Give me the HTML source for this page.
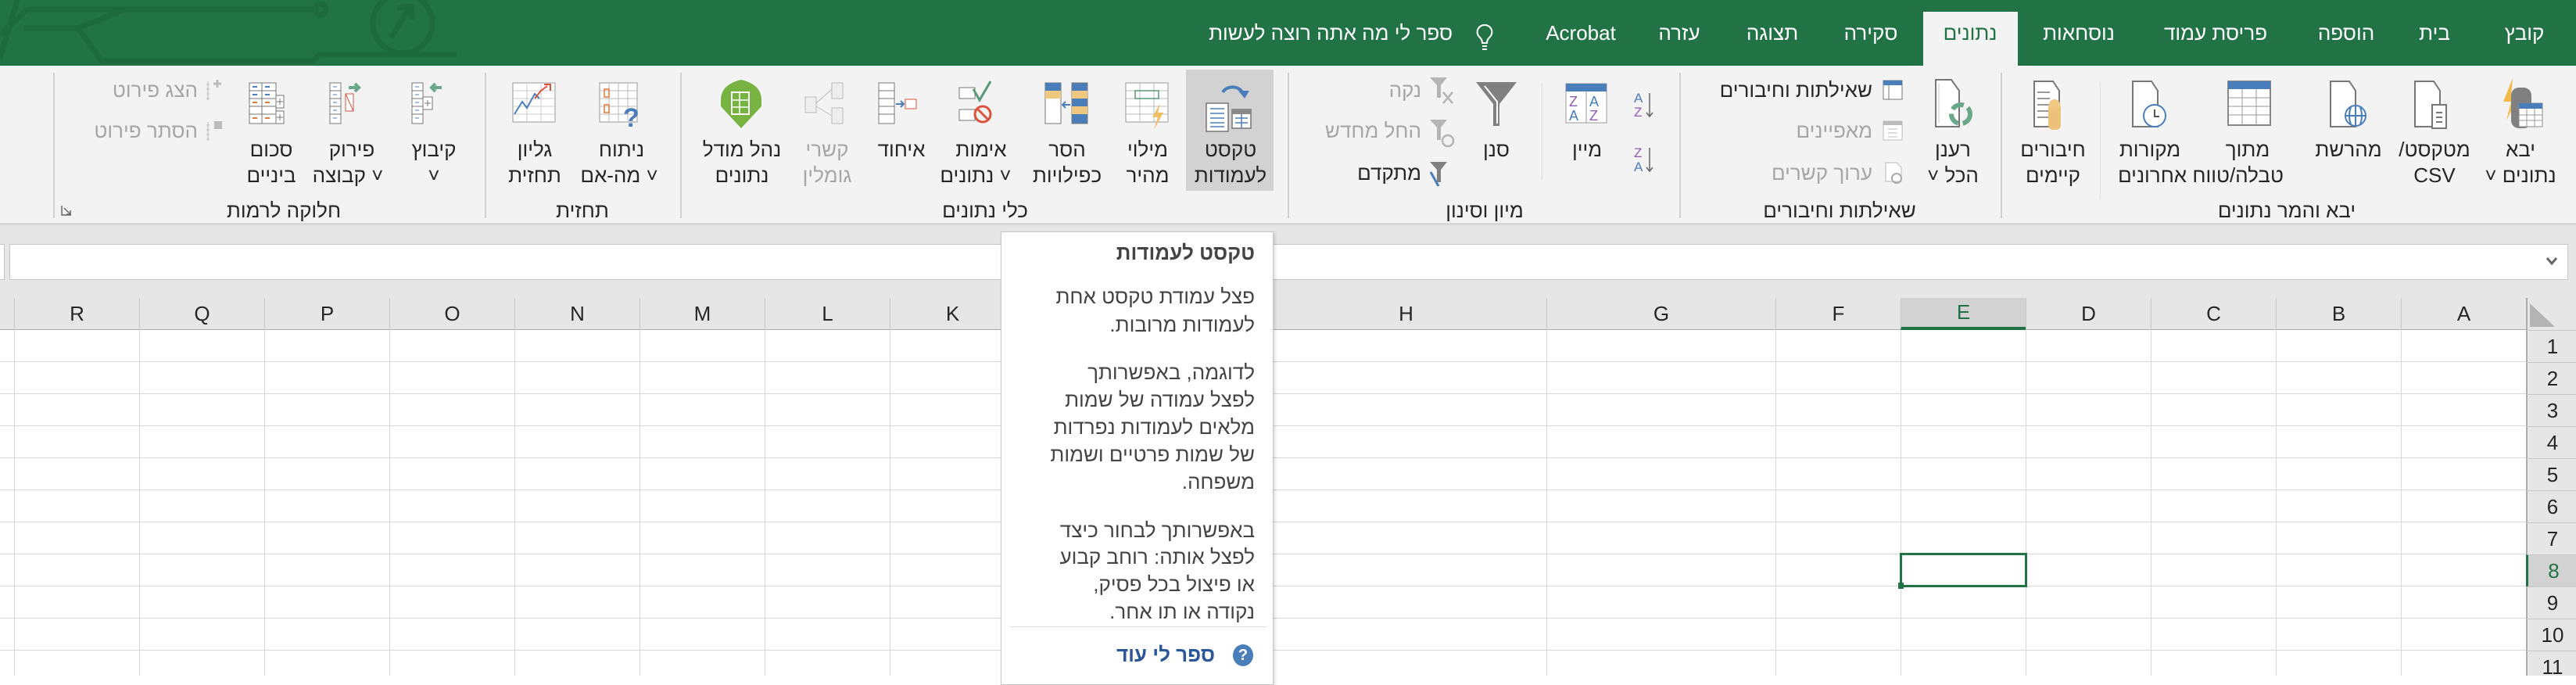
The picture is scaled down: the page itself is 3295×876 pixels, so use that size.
<!DOCTYPE html>
<html><head><meta charset="utf-8"><style>
*{margin:0;padding:0;box-sizing:border-box}
body{width:3295px;height:864px;overflow:hidden;background:#fff;font-family:"Liberation Sans","DejaVu Sans",sans-serif;position:relative}
.a{position:absolute}
.t{position:absolute;white-space:nowrap;font-size:26px;line-height:30px;color:#262626;direction:rtl}
.c{transform:translateX(-50%)}
.g{color:#a6a6a6}
.tab{position:absolute;top:27px;font-size:26px;line-height:30px;color:#fff;white-space:nowrap;transform:translateX(-50%);direction:rtl}
.sep{position:absolute;top:93px;width:2px;height:186px;background:#d2d2d2}
.vl{position:absolute;top:422px;width:1px;height:442px;background:#dadada}
.hl{position:absolute;left:0;width:3231px;height:1px;background:#d8d8d8}
.ch{position:absolute;top:381px;height:41px;font-size:26px;line-height:41px;color:#262626;text-align:center;border-left:1px solid #c8c8c8}
.rh{position:absolute;left:3231px;width:64px;height:41px;font-size:26px;line-height:41px;text-align:center;color:#262626;border-top:1px solid #c8c8c8;padding-left:4px}
.tt{position:absolute;right:23px;white-space:nowrap;font-size:26px;line-height:36px;color:#444;direction:rtl}
svg{position:absolute;overflow:visible}
</style></head><body>

<!-- title/tab bar -->
<div class="a" style="left:0;top:0;width:3295px;height:84px;background:#217346"></div>
<svg style="left:0;top:0" width="600" height="84">
<g stroke="#1d6a3e" stroke-width="7" fill="none">
<path d="M0 75 L22 0"/>
<path d="M0 45 L35 12 L135 12"/>
<path d="M30 36 L100 36 L160 12"/>
<path d="M100 36 L130 78 L400 78 L408 70 L585 70"/>
<path d="M130 12 L405 12"/>
<circle cx="410" cy="12" r="7"/>
<circle cx="515" cy="30" r="38"/>
<path d="M500 48 L525 8 M508 10 L526 8 L528 25"/>
</g></svg>
<div class="a" style="left:2460px;top:15px;width:121px;height:69px;background:#f3f3f3"></div>
<div class="tab" style="left:3229px">קובץ</div>
<div class="tab" style="left:3114px">בית</div>
<div class="tab" style="left:3001px">הוספה</div>
<div class="tab" style="left:2834px">פריסת עמוד</div>
<div class="tab" style="left:2659px">נוסחאות</div>
<div class="tab" style="left:2520px;color:#217346">נתונים</div>
<div class="tab" style="left:2393px">סקירה</div>
<div class="tab" style="left:2267px">תצוגה</div>
<div class="tab" style="left:2148px">עזרה</div>
<div class="tab" style="left:2022px">Acrobat</div>
<svg style="left:1888px;top:30px" width="22" height="38"><path d="M11 2 a9 9 0 0 1 6 16 c-2 2 -3 4 -3 7 h-6 c0 -3 -1 -5 -3 -7 a9 9 0 0 1 6 -16z" fill="none" stroke="#fff" stroke-width="2"/><path d="M8 29 h6 M8 33 h6" stroke="#fff" stroke-width="2"/></svg>
<div class="t" style="right:1437px;top:27px;color:#fff">ספר לי מה אתה רוצה לעשות</div>

<!-- ribbon -->
<div class="a" style="left:0;top:84px;width:3295px;height:204px;background:#f3f3f3;border-bottom:3px solid #d6d6d6"></div>
<div class="a" style="left:0;top:288px;width:3295px;height:576px;background:#e6e6e6"></div>

<div class="sep" style="left:2559px"></div>
<div class="sep" style="left:2148px"></div>
<div class="sep" style="left:1647px"></div>
<div class="sep" style="left:870px"></div>
<div class="sep" style="left:620px"></div>
<div class="sep" style="left:68px"></div>
<div class="a" style="left:2686px;top:105px;width:1px;height:150px;background:#dcdcdc"></div>
<div class="a" style="left:1972px;top:105px;width:1px;height:125px;background:#dcdcdc"></div>

<!-- group labels -->
<div class="t c" style="left:2925px;top:254px">יבא והמר נתונים</div>
<div class="t c" style="left:2353px;top:254px">שאילתות וחיבורים</div>
<div class="t c" style="left:1899px;top:254px">מיון וסינון</div>
<div class="t c" style="left:1260px;top:254px">כלי נתונים</div>
<div class="t c" style="left:745px;top:254px">תחזית</div>
<div class="t c" style="left:363px;top:254px">חלוקה לרמות</div>
<svg style="left:78px;top:262px" width="14" height="14"><path d="M1 1 v12 h12" fill="none" stroke="#666" stroke-width="1.5"/><path d="M4 4 L12 12 M7 12 h5 v-5" fill="none" stroke="#666" stroke-width="1.5"/></svg>

<!-- Get data group -->
<svg style="left:3192px;top:98px" width="64" height="66"><path d="M22 2 L10 32 h10 L14 56 L30 24 h-10 z" fill="#f2b94b"/><rect x="20" y="14" width="26" height="52" rx="10" fill="#808080"/><rect x="30" y="34" width="30" height="30" fill="#fff" stroke="#888"/><rect x="30" y="34" width="30" height="7" fill="#4a7ebb"/><path d="M30 49 h30 M30 56 h30 M40 41 v23 M50 41 v23" stroke="#999"/></svg>
<div class="t c" style="left:3224px;top:176px">יבא</div>
<div class="t c" style="left:3224px;top:209px">נתונים ˅</div>

<svg style="left:3085px;top:102px" width="64" height="64"><path d="M4 2 h24 l8 12 v46 h-32z" fill="#fff" stroke="#777" stroke-width="2"/><rect x="26" y="32" width="18" height="30" fill="#fff" stroke="#777" stroke-width="2"/><path d="M31 42 h8 M31 48 h8 M31 54 h8" stroke="#777" stroke-width="2"/></svg>
<div class="t c" style="left:3114px;top:176px">מטקסט/</div>
<div class="t c" style="left:3114px;top:209px">CSV</div>

<svg style="left:2975px;top:102px" width="64" height="64"><path d="M6 2 h24 l8 12 v46 h-32z" fill="#fff" stroke="#777" stroke-width="2"/><circle cx="38" cy="46" r="13" fill="#fff" stroke="#4a7ebb" stroke-width="2"/><path d="M25 46 h26 M38 33 v26 M32 35 q-4 11 0 22 M44 35 q4 11 0 22" fill="none" stroke="#4a7ebb" stroke-width="2"/></svg>
<div class="t c" style="left:3004px;top:176px">מהרשת</div>

<svg style="left:2845px;top:102px" width="64" height="64"><rect x="5" y="2" width="54" height="56" fill="#fff" stroke="#888" stroke-width="2"/><rect x="5" y="2" width="54" height="10" fill="#4a7ebb"/><path d="M5 23 h54 M5 34 h54 M5 45 h54 M23 12 v46 M41 12 v46" stroke="#999"/></svg>
<div class="t c" style="left:2875px;top:176px">מתוך</div>
<div class="t c" style="left:2815px;top:209px">טבלה/טווח אחרונים</div>
<div class="t c" style="left:2750px;top:176px">מקורות</div>

<svg style="left:2722px;top:102px" width="64" height="64"><path d="M6 2 h24 l8 12 v46 h-32z" fill="#fff" stroke="#777" stroke-width="2"/><circle cx="34" cy="46" r="14" fill="#fff" stroke="#4a7ebb" stroke-width="2"/><path d="M34 38 v9 h6" fill="none" stroke="#555" stroke-width="2"/></svg>

<svg style="left:2596px;top:102px" width="64" height="64"><path d="M6 2 h24 l8 12 v46 h-32z" fill="#fff" stroke="#777" stroke-width="2"/><path d="M10 16 h16 M10 24 h16 M10 32 h16 M10 40 h16 M10 48 h16" stroke="#999" stroke-width="2"/><rect x="24" y="30" width="16" height="34" rx="6" fill="#ecc17a"/><circle cx="32" cy="32" r="7" fill="#f0c880"/></svg>
<div class="t c" style="left:2626px;top:176px">חיבורים</div>
<div class="t c" style="left:2626px;top:209px">קיימים</div>

<svg style="left:2468px;top:100px" width="64" height="66"><path d="M8 2 h20 l10 14 v46 h-30z" fill="#fff" stroke="#777" stroke-width="2"/><path d="M12 6 v52" stroke="#ccc"/><circle cx="40" cy="46" r="12" fill="none" stroke="#6aa88a" stroke-width="6" stroke-dasharray="16 6"/></svg>
<div class="t c" style="left:2498px;top:176px">רענן</div>
<div class="t c" style="left:2498px;top:209px">הכל ˅</div>

<svg style="left:2408px;top:102px" width="26" height="26"><rect x="1" y="1" width="24" height="24" fill="#fff" stroke="#777"/><rect x="1" y="1" width="24" height="6" fill="#4a7ebb"/><path d="M8 7 v18" stroke="#777"/></svg>
<div class="t" style="right:900px;top:100px">שאילתות וחיבורים</div>
<svg style="left:2408px;top:154px" width="26" height="26"><rect x="1" y="1" width="24" height="24" fill="#fff" stroke="#bbb"/><rect x="1" y="1" width="24" height="5" fill="#bbb"/><path d="M7 11 h12 M7 16 h12 M7 21 h12" stroke="#bbb"/></svg>
<div class="t g" style="right:900px;top:152px">מאפיינים</div>
<svg style="left:2410px;top:206px" width="26" height="30"><path d="M2 2 h14 l6 6 v18 h-20z" fill="#fff" stroke="#bbb"/><circle cx="16" cy="22" r="6" fill="none" stroke="#aaa" stroke-width="2"/></svg>
<div class="t g" style="right:900px;top:206px">ערוך קשרים</div>

<!-- sort & filter -->
<svg style="left:2088px;top:115px" width="30" height="40"><text x="2" y="16" font-size="17" fill="#4a7ebb" font-family="Liberation Sans">A</text><text x="2" y="34" font-size="17" fill="#8e5bb5" font-family="Liberation Sans">Z</text><path d="M22 4 v30 M18 29 l4 5 4-5" fill="none" stroke="#666" stroke-width="1.5"/></svg>
<svg style="left:2088px;top:185px" width="30" height="40"><text x="2" y="16" font-size="17" fill="#8e5bb5" font-family="Liberation Sans">Z</text><text x="2" y="34" font-size="17" fill="#4a7ebb" font-family="Liberation Sans">A</text><path d="M22 4 v30 M18 29 l4 5 4-5" fill="none" stroke="#666" stroke-width="1.5"/></svg>
<svg style="left:2002px;top:106px" width="56" height="52"><rect x="1" y="1" width="52" height="50" fill="#fff" stroke="#999"/><rect x="1" y="1" width="52" height="10" fill="#4a7ebb"/><path d="M27 11 v40" stroke="#999"/><text x="5" y="30" font-size="18" fill="#8e5bb5" font-family="Liberation Sans">Z</text><text x="31" y="30" font-size="18" fill="#4a7ebb" font-family="Liberation Sans">A</text><text x="5" y="48" font-size="18" fill="#4a7ebb" font-family="Liberation Sans">A</text><text x="31" y="48" font-size="18" fill="#8e5bb5" font-family="Liberation Sans">Z</text></svg>
<div class="t c" style="left:2030px;top:176px">מיין</div>
<svg style="left:1887px;top:104px" width="56" height="58"><path d="M1 1 h52 l-22 28 v28 h-8 v-28z" fill="#808080"/><path d="M12 6 l16 20 v28" fill="none" stroke="#fff" stroke-width="2"/></svg>
<div class="t c" style="left:1914px;top:176px">סנן</div>
<svg style="left:1828px;top:98px" width="34" height="38"><path d="M1 1 h22 l-8 10 v16 h-5 v-16z" fill="#b5b5b5"/><path d="M18 20 l12 14 M30 20 l-12 14" stroke="#b5b5b5" stroke-width="2.5"/></svg>
<div class="t g" style="right:1477px;top:100px">נקה</div>
<svg style="left:1828px;top:152px" width="34" height="38"><path d="M1 1 h22 l-8 10 v16 h-5 v-16z" fill="#b5b5b5"/><circle cx="24" cy="28" r="7" fill="none" stroke="#b5b5b5" stroke-width="2.5"/></svg>
<div class="t g" style="right:1477px;top:152px">החל מחדש</div>
<svg style="left:1828px;top:206px" width="34" height="38"><path d="M1 1 h22 l-8 10 v16 h-5 v-16z" fill="#808080"/><path d="M2 14 l10 18" stroke="#4a7ebb" stroke-width="3"/></svg>
<div class="t" style="right:1477px;top:206px">מתקדם</div>

<!-- data tools -->
<div class="a" style="left:1517px;top:89px;width:112px;height:155px;background:#d2d2d2"></div>
<svg style="left:1540px;top:104px" width="70" height="60"><path d="M24 14 a14 12 0 0 1 26 2" fill="none" stroke="#4a7ebb" stroke-width="4"/><path d="M44 12 l8 10 6-10z" fill="#4a7ebb"/><rect x="3" y="28" width="28" height="36" fill="#fff" stroke="#777" stroke-width="1.5"/><path d="M8 35 h18 M8 41 h18 M8 47 h18 M8 53 h18 M8 58 h18" stroke="#4a7ebb" stroke-width="1.5"/><rect x="36" y="36" width="24" height="24" fill="#fff" stroke="#777" stroke-width="1.5"/><rect x="36" y="36" width="24" height="6" fill="#888"/><path d="M40 47 h16 M40 53 h16 M48 42 v18" stroke="#4a7ebb" stroke-width="1.5"/></svg>
<div class="t c" style="left:1574px;top:176px">טקסט</div>
<div class="t c" style="left:1574px;top:209px">לעמודות</div>

<svg style="left:1438px;top:104px" width="64" height="62"><rect x="2" y="2" width="54" height="50" fill="#fff" stroke="#999"/><path d="M2 12 h54 M2 22 h54 M2 32 h54 M2 42 h54 M20 2 v50 M38 2 v50" stroke="#bbb"/><rect x="14" y="12" width="30" height="10" fill="none" stroke="#5a9a78" stroke-width="1.5"/><path d="M46 28 l-10 18 h7 l-5 16 12-22 h-7z" fill="#efbd63"/></svg>
<div class="t c" style="left:1468px;top:176px">מילוי</div>
<div class="t c" style="left:1468px;top:209px">מהיר</div>

<svg style="left:1335px;top:104px" width="64" height="60"><rect x="2" y="2" width="20" height="52" fill="#fff" stroke="#777"/><rect x="2" y="2" width="20" height="10" fill="#4a7ebb"/><rect x="2" y="12" width="20" height="10" fill="#efc880"/><rect x="36" y="2" width="20" height="52" fill="#4a7ebb" stroke="#777"/><rect x="36" y="12" width="20" height="10" fill="#efc880"/><rect x="36" y="32" width="20" height="10" fill="#efc880"/><path d="M34 30 h-10 M28 26 l-4 4 4 4" fill="none" stroke="#4a7ebb" stroke-width="2"/></svg>
<div class="t c" style="left:1365px;top:176px">הסר</div>
<div class="t c" style="left:1365px;top:209px">כפילויות</div>

<svg style="left:1225px;top:102px" width="64" height="62"><rect x="2" y="10" width="20" height="14" fill="#fff" stroke="#777"/><rect x="2" y="38" width="20" height="14" fill="#fff" stroke="#777"/><path d="M20 12 l8 14 14-24" fill="none" stroke="#5a9a78" stroke-width="3"/><circle cx="32" cy="44" r="10" fill="none" stroke="#d9533b" stroke-width="3"/><path d="M26 38 l12 12" stroke="#d9533b" stroke-width="3"/></svg>
<div class="t c" style="left:1255px;top:176px">אימות</div>
<div class="t c" style="left:1248px;top:209px">˅ נתונים</div>

<svg style="left:1122px;top:104px" width="64" height="60"><rect x="2" y="2" width="20" height="52" fill="#fff" stroke="#777"/><path d="M2 12 h20 M2 22 h20 M2 32 h20 M2 42 h20" stroke="#777"/><rect x="36" y="23" width="14" height="12" fill="#fff" stroke="#d9533b"/><path d="M24 29 h10 M30 25 l4 4-4 4" fill="none" stroke="#4a7ebb" stroke-width="2"/></svg>
<div class="t c" style="left:1153px;top:176px">איחוד</div>

<svg style="left:1028px;top:104px" width="64" height="60"><rect x="2" y="20" width="14" height="20" fill="#eee" stroke="#bbb"/><rect x="36" y="2" width="14" height="20" fill="#eee" stroke="#bbb"/><rect x="36" y="34" width="14" height="20" fill="#eee" stroke="#bbb"/><path d="M16 28 L36 10 M16 32 L36 44" stroke="#bbb"/></svg>
<div class="t c g" style="left:1058px;top:176px">קשרי</div>
<div class="t c g" style="left:1058px;top:209px">גומלין</div>

<svg style="left:918px;top:100px" width="60" height="64"><path d="M30 2 q26 6 26 26 v8 l-26 28 l-26 -28 v-8 q0 -20 26 -26z" fill="#76b340"/><path d="M18 18 h22 v28 h-22z" fill="none" stroke="#fff" stroke-width="2"/><path d="M18 28 h22 M18 37 h22 M28 18 v28" stroke="#fff" stroke-width="1.5"/></svg>
<div class="t c" style="left:949px;top:176px">נהל מודל</div>
<div class="t c" style="left:949px;top:209px">נתונים</div>

<svg style="left:765px;top:104px" width="64" height="62"><rect x="2" y="2" width="48" height="50" fill="#fff" stroke="#999"/><path d="M2 12 h48 M2 22 h48 M2 32 h48 M2 42 h48 M14 2 v50 M26 2 v50 M38 2 v50" stroke="#bbb"/><rect x="8" y="10" width="6" height="10" fill="none" stroke="#e07a3a" stroke-width="1.5"/><rect x="8" y="30" width="6" height="10" fill="none" stroke="#e07a3a" stroke-width="1.5"/><text x="32" y="58" font-size="34" font-weight="bold" fill="#4a7ebb" font-family="Liberation Sans">?</text></svg>
<div class="t c" style="left:795px;top:176px">ניתוח</div>
<div class="t c" style="left:792px;top:209px">˅ מה-אם</div>

<svg style="left:654px;top:104px" width="64" height="60"><rect x="2" y="2" width="54" height="50" fill="#fff" stroke="#999"/><path d="M2 12 h54 M2 22 h54 M2 32 h54 M2 42 h54 M20 2 v50 M38 2 v50" stroke="#ccc"/><path d="M4 42 l10 -16 6 8 10 -18 6 6" fill="none" stroke="#4a7ebb" stroke-width="2"/><path d="M30 22 l8 -10 8 -6 M42 4 h8 v8" fill="none" stroke="#d9533b" stroke-width="2"/></svg>
<div class="t c" style="left:684px;top:176px">גליון</div>
<div class="t c" style="left:684px;top:209px">תחזית</div>

<!-- outline -->
<svg style="left:525px;top:102px" width="64" height="60"><rect x="2" y="4" width="14" height="52" fill="#fff" stroke="#777"/><path d="M2 14 h14 M2 24 h14 M2 34 h14 M2 44 h14" stroke="#777"/><path d="M6 9 h5 M6 19 h5 M6 29 h5 M6 39 h5 M6 49 h5" stroke="#4a7ebb"/><rect x="16" y="22" width="12" height="16" fill="#fff" stroke="#777"/><path d="M22 26 v8 M18 30 h8" stroke="#777"/><path d="M40 10 h-12 M32 5 l-5 5 5 5" fill="none" stroke="#6aa88a" stroke-width="4"/></svg>
<div class="t c" style="left:555px;top:176px">קיבוץ</div>
<div class="t c" style="left:555px;top:209px">˅</div>

<svg style="left:420px;top:102px" width="64" height="60"><rect x="2" y="4" width="14" height="52" fill="#fff" stroke="#777"/><path d="M2 14 h14 M2 24 h14 M2 34 h14 M2 44 h14" stroke="#777"/><path d="M6 9 h5 M6 19 h5 M6 29 h5 M6 39 h5 M6 49 h5" stroke="#4a7ebb"/><rect x="22" y="18" width="10" height="22" fill="#fff" stroke="#d9533b"/><path d="M22 18 l10 22" stroke="#d9533b"/><path d="M26 10 h12 M34 5 l5 5-5 5" fill="none" stroke="#6aa88a" stroke-width="4"/></svg>
<div class="t c" style="left:450px;top:176px">פירוק</div>
<div class="t c" style="left:445px;top:209px">˅ קבוצה</div>

<svg style="left:317px;top:102px" width="64" height="60"><rect x="2" y="4" width="34" height="52" fill="#fff" stroke="#777"/><path d="M2 14 h34 M2 24 h34 M2 34 h34 M2 44 h34 M18 4 v52" stroke="#777"/><path d="M6 29 h6 M22 29 h6 M6 49 h6 M22 49 h6" stroke="#e07a3a" stroke-width="2"/><path d="M6 9 h6 M22 9 h6 M6 19 h6 M22 19 h6" stroke="#4a7ebb" stroke-width="2"/><rect x="36" y="20" width="10" height="16" fill="#fff" stroke="#777"/><rect x="36" y="40" width="10" height="16" fill="#fff" stroke="#777"/><path d="M41 24 v8 M37 28 h8 M41 44 v8 M37 48 h8" stroke="#777"/></svg>
<div class="t c" style="left:347px;top:176px">סכום</div>
<div class="t c" style="left:347px;top:209px">ביניים</div>

<svg style="left:262px;top:100px" width="30" height="30"><path d="M4 4 v24 M2 8 h4 M2 14 h4 M2 20 h4 M2 26 h4" stroke="#bbb"/><path d="M16 2 v10 M11 7 h10" stroke="#bbb" stroke-width="3"/></svg>
<div class="t g" style="right:3042px;top:100px">הצג פירוט</div>
<svg style="left:262px;top:152px" width="30" height="30"><path d="M4 4 v24 M2 8 h4 M2 14 h4 M2 20 h4 M2 26 h4" stroke="#bbb"/><rect x="12" y="3" width="10" height="10" fill="#bbb"/></svg>
<div class="t g" style="right:3042px;top:152px">הסתר פירוט</div>

<!-- formula bar -->
<div class="a" style="left:-2px;top:312px;width:8px;height:46px;background:#fff;border:1px solid #c6c6c6"></div>
<div class="a" style="left:12px;top:312px;width:3273px;height:46px;background:#fff;border:1px solid #c6c6c6"></div>
<svg style="left:3257px;top:328px" width="14" height="12"><path d="M1 2 l6 7 6-7" fill="none" stroke="#666" stroke-width="3"/></svg>

<!-- grid -->
<div class="a" style="left:0;top:422px;width:3231px;height:442px;background:#fff"></div>
<div class="hl" style="top:462px"></div><div class="hl" style="top:503px"></div><div class="hl" style="top:544px"></div><div class="hl" style="top:585px"></div><div class="hl" style="top:626px"></div><div class="hl" style="top:667px"></div><div class="hl" style="top:708px"></div><div class="hl" style="top:749px"></div><div class="hl" style="top:790px"></div><div class="hl" style="top:831px"></div>
<div class="vl" style="left:18px"></div><div class="vl" style="left:178px"></div><div class="vl" style="left:338px"></div><div class="vl" style="left:498px"></div><div class="vl" style="left:658px"></div><div class="vl" style="left:818px"></div><div class="vl" style="left:978px"></div><div class="vl" style="left:1138px"></div><div class="vl" style="left:1298px"></div><div class="vl" style="left:1978px"></div><div class="vl" style="left:2271px"></div><div class="vl" style="left:2431px"></div><div class="vl" style="left:2591px"></div><div class="vl" style="left:2751px"></div><div class="vl" style="left:2911px"></div><div class="vl" style="left:3071px"></div>

<!-- column headers -->
<div class="a" style="left:0;top:421px;width:3231px;height:1px;background:#ababab"></div>
<div class="ch" style="left:18px;width:160px">R</div>
<div class="ch" style="left:178px;width:160px">Q</div>
<div class="ch" style="left:338px;width:160px">P</div>
<div class="ch" style="left:498px;width:160px">O</div>
<div class="ch" style="left:658px;width:160px">N</div>
<div class="ch" style="left:818px;width:160px">M</div>
<div class="ch" style="left:978px;width:160px">L</div>
<div class="ch" style="left:1138px;width:160px">K</div>
<div class="ch" style="left:1298px;width:680px;padding-left:320px">H</div>
<div class="ch" style="left:1978px;width:293px">G</div>
<div class="ch" style="left:2271px;width:160px">F</div>
<div class="ch" style="left:2431px;width:160px;background:#d2d2d2;color:#217346;border-bottom:4px solid #217346;line-height:37px">E</div>
<div class="ch" style="left:2591px;width:160px">D</div>
<div class="ch" style="left:2751px;width:160px">C</div>
<div class="ch" style="left:2911px;width:160px">B</div>
<div class="ch" style="left:3071px;width:160px">A</div>
<div class="a" style="left:3231px;top:381px;width:64px;height:483px;background:#e6e6e6;border-left:2px solid #ababab"></div>
<svg style="left:3234px;top:386px" width="36" height="34"><path d="M2 2 L34 32 H2z" fill="#b4b4b4"/></svg>
<div class="rh" style="top:422px">1</div><div class="rh" style="top:463px">2</div><div class="rh" style="top:504px">3</div><div class="rh" style="top:545px">4</div><div class="rh" style="top:586px">5</div><div class="rh" style="top:627px">6</div><div class="rh" style="top:668px">7</div>
<div class="rh" style="top:709px;background:#d2d2d2;color:#217346;border-left:3px solid #217346">8</div>
<div class="rh" style="top:750px">9</div><div class="rh" style="top:791px">10</div><div class="rh" style="top:832px">11</div>

<!-- selected cell -->
<div class="a" style="left:2430px;top:707px;width:163px;height:44px;border:3px solid #217346"></div>
<div class="a" style="left:2428px;top:745px;width:7px;height:8px;background:#217346"></div>

<!-- tooltip -->
<div class="a" style="left:1280px;top:296px;width:349px;height:580px;background:#fff;border:1px solid #c6c6c6;box-shadow:2px 2px 4px rgba(0,0,0,.15)">
<div class="tt" style="top:8px;font-weight:bold">טקסט לעמודות</div>
<div class="tt" style="top:64px">פצל עמודת טקסט אחת</div>
<div class="tt" style="top:100px">לעמודות מרובות.</div>
<div class="tt" style="top:161px">לדוגמה, באפשרותך</div>
<div class="tt" style="top:196px">לפצל עמודה של שמות</div>
<div class="tt" style="top:231px">מלאים לעמודות נפרדות</div>
<div class="tt" style="top:266px">של שמות פרטיים ושמות</div>
<div class="tt" style="top:301px">משפחה.</div>
<div class="tt" style="top:363px">באפשרותך לבחור כיצד</div>
<div class="tt" style="top:397px">לפצל אותה: רוחב קבוע</div>
<div class="tt" style="top:432px">או פיצול בכל פסיק,</div>
<div class="tt" style="top:467px">נקודה או תו אחר.</div>
<div class="a" style="left:10px;top:504px;width:330px;height:1px;background:#e0e0e0"></div>
<div class="tt" style="top:522px;right:74px;font-weight:bold;color:#2b579a">ספר לי עוד</div>
<div class="a" style="left:296px;top:527px;width:26px;height:28px;border-radius:50%;background:#4a7ebb;color:#fff;font-size:20px;font-weight:bold;text-align:center;line-height:28px">?</div>
</div>

</body></html>
